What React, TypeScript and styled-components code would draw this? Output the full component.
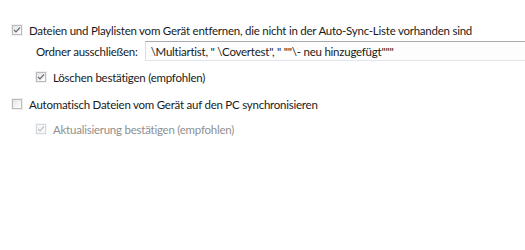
import React from "react";
import styled, { createGlobalStyle } from "styled-components";

const GlobalStyle = createGlobalStyle`
  html, body {
    margin: 0;
    padding: 0;
    background: #ffffff;
  }
  body {
    font-family: Lato, "Open Sans", sans-serif;
    font-size: 11.5px;
    letter-spacing: -0.24px;
    color: #1a1a1a;
  }
`;

const Page = styled.div`
  width: 525px;
  height: 250px;
  overflow: hidden;
  padding: 21px 0 0 12px;
  box-sizing: border-box;
  display: flex;
  flex-direction: column;
`;

const Option = styled.label<{ $indent?: boolean; $gap: number; $disabled?: boolean }>`
  display: flex;
  align-items: center;
  height: 18px;
  margin-top: ${(p) => p.$gap}px;
  padding-left: ${(p) => (p.$indent ? 24 : 0)}px;
  column-gap: 7px;
  white-space: nowrap;
  color: ${(p) => (p.$disabled ? "#8f8f8f" : "#1a1a1a")};
`;

const Box = styled.span<{ $disabled?: boolean }>`
  width: 8px;
  height: 8px;
  flex: none;
  display: flex;
  align-items: center;
  justify-content: center;
  border: 1px solid ${(p) => (p.$disabled ? "#d6d9dc" : "#b9bbbe")};
  background: ${(p) =>
    p.$disabled
      ? "#f7f8f9"
      : "linear-gradient(135deg, #e4e4e4 0%, #f5f5f5 60%, #ffffff 100%)"};
  box-shadow: 0 0 0 1px ${(p) => (p.$disabled ? "#f5f6f7" : "#f0f0f0")};

  svg {
    display: block;
  }
`;

const ExcludeRow = styled.div`
  display: flex;
  align-items: center;
  margin-top: 2px;
  padding-left: 24px;
  column-gap: 7px;
  white-space: nowrap;
`;

const TextField = styled.div`
  flex: 1;
  height: 20px;
  box-sizing: border-box;
  display: flex;
  align-items: center;
  padding-left: 5px;
  border-top: 1px solid #a9abaf;
  border-left: 1px solid #dcdee2;
  border-bottom: 1px solid #e1e7ec;
  background: #fdfdfd;
  overflow: hidden;
`;

const Check = ({ checked, disabled }: { checked: boolean; disabled?: boolean }) => (
  <Box $disabled={disabled}>
    {checked && (
      <svg width="8" height="8" viewBox="0 0 8 8">
        <path
          d="M1 4 L3 6 L7 1.5"
          fill="none"
          stroke={disabled ? "#bfc3c7" : "#676a6f"}
          strokeWidth="1.2"
        />
      </svg>
    )}
  </Box>
);

export default function App() {
  return (
    <>
      <GlobalStyle />
      <Page>
        <Option $gap={0}>
          <Check checked />
          Dateien und Playlisten vom Gerät entfernen, die nicht in der Auto-Sync-Liste vorhanden sind
        </Option>
        <ExcludeRow>
          Ordner ausschließen:
          <TextField>
            \Multiartist, " \Covertest", " ""\- neu hinzugefügt"""
          </TextField>
        </ExcludeRow>
        <Option $indent $gap={7}>
          <Check checked />
          Löschen bestätigen (empfohlen)
        </Option>
        <Option $gap={9}>
          <Check checked={false} />
          Automatisch Dateien vom Gerät auf den PC synchronisieren
        </Option>
        <Option $indent $gap={7} $disabled>
          <Check checked disabled />
          Aktualisierung bestätigen (empfohlen)
        </Option>
      </Page>
    </>
  );
}
